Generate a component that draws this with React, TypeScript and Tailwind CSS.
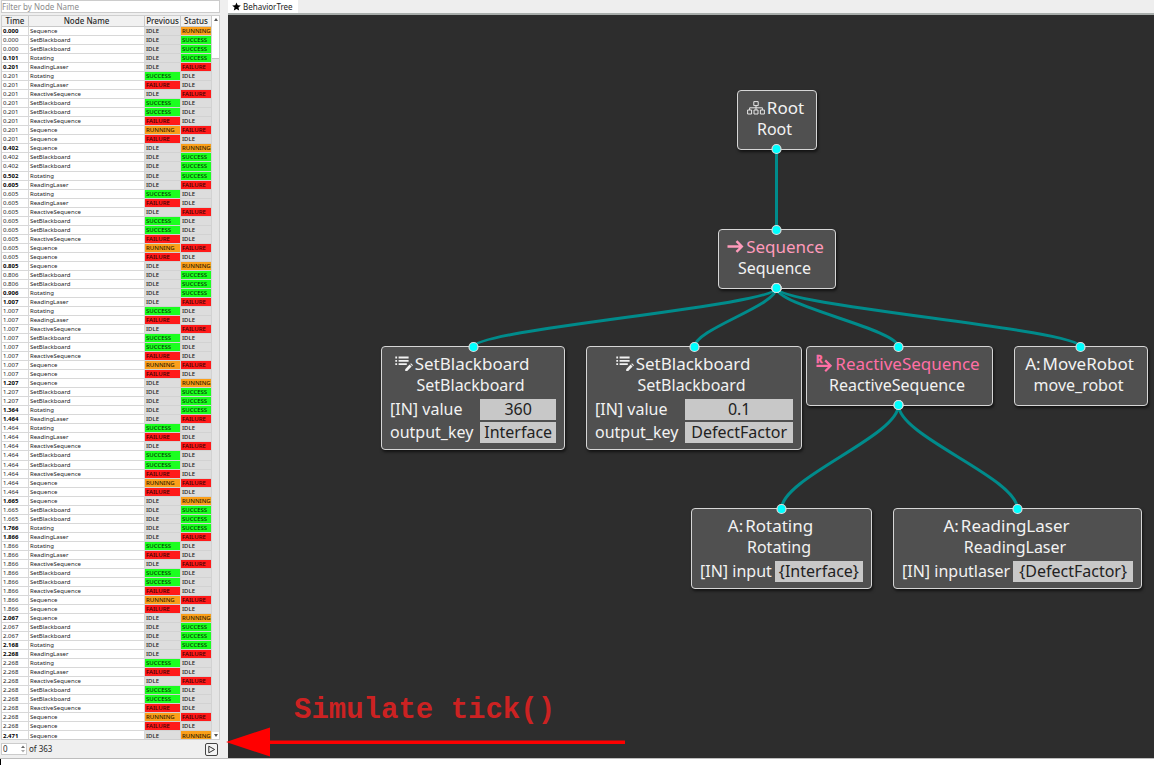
import React from "react";

type Status = "IDLE" | "RUNNING" | "SUCCESS" | "FAILURE";
type Transition = { time: string; bold: boolean; name: string; previous: Status; status: Status };

const CYCLE: { slot: number; name: string; previous: Status; status: Status }[] = [
  { slot: 0, name: "Sequence", previous: "IDLE", status: "RUNNING" },
  { slot: 1, name: "SetBlackboard", previous: "IDLE", status: "SUCCESS" },
  { slot: 1, name: "SetBlackboard", previous: "IDLE", status: "SUCCESS" },
  { slot: 2, name: "Rotating", previous: "IDLE", status: "SUCCESS" },
  { slot: 3, name: "ReadingLaser", previous: "IDLE", status: "FAILURE" },
  { slot: 3, name: "Rotating", previous: "SUCCESS", status: "IDLE" },
  { slot: 3, name: "ReadingLaser", previous: "FAILURE", status: "IDLE" },
  { slot: 3, name: "ReactiveSequence", previous: "IDLE", status: "FAILURE" },
  { slot: 3, name: "SetBlackboard", previous: "SUCCESS", status: "IDLE" },
  { slot: 3, name: "SetBlackboard", previous: "SUCCESS", status: "IDLE" },
  { slot: 3, name: "ReactiveSequence", previous: "FAILURE", status: "IDLE" },
  { slot: 3, name: "Sequence", previous: "RUNNING", status: "FAILURE" },
  { slot: 3, name: "Sequence", previous: "FAILURE", status: "IDLE" },
];

const TIMES = [
  ["0.000", "0.000", "0.101", "0.201"],
  ["0.402", "0.402", "0.502", "0.605"],
  ["0.805", "0.806", "0.906", "1.007"],
  ["1.207", "1.207", "1.364", "1.464"],
  ["1.665", "1.665", "1.766", "1.866"],
  ["2.067", "2.067", "2.168", "2.268"],
];

const TRANSITIONS: Transition[] = [
  ...TIMES.flatMap((times) =>
    CYCLE.map((step, i) => ({
      time: times[step.slot],
      bold: i === 0 || i === 3 || i === 4,
      name: step.name,
      previous: step.previous,
      status: step.status,
    })),
  ),
  { time: "2.471", bold: true, name: "Sequence", previous: "IDLE", status: "RUNNING" },
];

const STATUS_CLASS: Record<Status, string> = {
  IDLE: "bg-[#dddddd] text-[#1c1c1c]",
  RUNNING: "bg-[#fb9f1a] text-[#2e1c00]",
  SUCCESS: "bg-[#1bff1f] text-[#033503]",
  FAILURE: "bg-[#ff1a1a] text-[#3a0202]",
};

function StatusCell({ value }: { value: Status }) {
  return (
    <td className={`border-r border-b border-[#d2d2d2] p-0 pl-px font-medium ${STATUS_CLASS[value]}`}>
      {value}
    </td>
  );
}

function TransitionTable() {
  return (
    <div className="flex min-h-0 flex-1 border border-[#cfcfcf] bg-white">
      <div className="min-w-0 flex-1 overflow-hidden">
        <table className="h-[725px] w-full table-fixed border-separate border-spacing-0 text-left text-[6px] leading-[8px] text-[#1c1c1c]">
          <colgroup>
            <col className="w-[27px]" />
            <col />
            <col className="w-[36px]" />
            <col className="w-[31px]" />
          </colgroup>
          <thead>
            <tr className="h-[11px] bg-[#f1f1f1] text-center text-[8px] leading-[10px] text-[#2a2a2a]">
              {["Time", "Node Name", "Previous", "Status"].map((label) => (
                <th key={label} className="border-r border-b border-[#c9c9c9] p-0 text-center font-medium">
                  {label}
                </th>
              ))}
            </tr>
          </thead>
          <tbody>
            {TRANSITIONS.map((row, i) => (
              <tr key={i} className="h-[9px]">
                <td className={row.bold ? "border-r border-b border-[#d8d8d8] p-0 pl-px font-bold text-black" : "border-r border-b border-[#d8d8d8] p-0 pl-px"}>
                  {row.time}
                </td>
                <td className="border-r border-b border-[#d8d8d8] p-0 pl-px">{row.name}</td>
                <StatusCell value={row.previous} />
                <StatusCell value={row.status} />
              </tr>
            ))}
          </tbody>
        </table>
      </div>
      <div className="flex w-[7px] flex-col bg-[#e4e4e4]">
        <button aria-label="Scroll up" className="flex h-[7px] items-center justify-center bg-white">
          <svg viewBox="0 0 4 3" className="h-[3px] w-1 fill-[#555]"><path d="M0 3 2 0 4 3Z" /></svg>
        </button>
        <div className="h-9 border-b border-[#c4c4c4] bg-white" />
        <div className="flex-1" />
        <button aria-label="Scroll down" className="flex h-[7px] items-center justify-center bg-white">
          <svg viewBox="0 0 4 3" className="h-[3px] w-1 fill-[#555]"><path d="M0 0 2 3 4 0Z" /></svg>
        </button>
      </div>
    </div>
  );
}

function Sidebar() {
  return (
    <aside className="flex w-[228px] shrink-0 flex-col bg-[#efefef] pr-2 pl-px">
      <input
        type="text"
        aria-label="Filter by Node Name"
        placeholder="Filter by Node Name"
        className="mb-[2px] h-[13px] w-full border border-[#cccccc] bg-white p-0 text-[8px] leading-[11px] text-[#333] outline-none placeholder:text-[#8c8c8c]"
      />
      <TransitionTable />
      <div className="flex h-[18px] shrink-0 items-center text-[8px] text-[#2a2a2a]">
        <div className="flex h-[12px] w-[26px] items-center border border-[#cccccc] bg-white">
          <input aria-label="Transition index" defaultValue="0" className="w-[18px] p-0 pl-px leading-[10px] outline-none" />
          <svg viewBox="0 0 6 10" className="h-[10px] w-[6px]">
            <path d="M1 4 3 1.4 5 4Z" fill="#666" />
            <path d="M1 6 3 8.6 5 6Z" fill="#aaa" />
          </svg>
        </div>
        <span className="ml-[2px]">of 363</span>
        <button aria-label="Play" className="mr-[2px] ml-auto flex h-[13px] w-[13px] items-center justify-center rounded-[2px] border border-[#444] bg-[#f4f4f4]">
          <svg viewBox="0 0 9 9" className="h-[9px] w-[9px] fill-none stroke-[#333]"><path d="M1.8 1.2 7.6 4.5 1.8 7.8Z" /></svg>
        </button>
      </div>
    </aside>
  );
}

function TreeIcon() {
  return (
    <svg viewBox="0 0 18 14" className="h-[14px] w-[18px] shrink-0 fill-none stroke-[#e6e6e6]">
      <path d="M6.8.6h4.4v4H6.8zM.6 9h4v4h-4zM7 9h4v4H7zM13.4 9h4v4h-4zM9 4.6V9M2.6 9V6.8h12.8V9" />
    </svg>
  );
}

function ArrowIcon() {
  return (
    <svg viewBox="0 0 17 14" className="h-[14px] w-[17px] shrink-0 fill-none stroke-[#ff9bbb]">
      <path strokeWidth="2.4" d="M.5 6.5h14.5M9.5 1.2 14.8 6.5 9.5 11.8" />
    </svg>
  );
}

function ListEditIcon() {
  return (
    <svg viewBox="0 0 18 16" className="h-4 w-[18px] shrink-0 fill-[#f2f2f2]">
      <path d="M.3.6h1.8v1.8H.3zM.3 3.9h1.8v1.8H.3zM.3 7.2h1.8V9H.3zM3.6.6h10v1.8h-10zM3.6 3.9h10v1.8h-10zM3.6 7.2h8.2V9H3.6z" />
      <path d="M10.2 13.2 14.6 8.6 16.6 10.6 12.2 15H10.2zM15.2 8 16 7.2 18 9.2 17.2 10z" />
    </svg>
  );
}

function ReactiveIcon() {
  return (
    <svg viewBox="0 0 17 17" className="h-[17px] w-[17px] shrink-0 overflow-visible fill-none stroke-[#ff6fa5]">
      <text x="0" y="7.6" fontSize="10" fontWeight="800" strokeWidth="0.3" fill="#ff6fa5">R</text>
      <path strokeWidth="2.2" d="M.5 10.8h14M9.2 5.4 14.6 10.8 9.2 16.2" />
    </svg>
  );
}

type TreeNode = {
  id: string;
  place: string;
  icon: React.ReactNode;
  title: string;
  titleClass: string;
  name: string;
  ports?: [string, string][];
};

const ACTION = <span className="text-[#f2f2f2]">A:</span>;

const NODES: TreeNode[] = [
  { id: "root", place: "left-[509px] top-[75px] w-[80px] h-[60px]", icon: <TreeIcon />, title: "Root", titleClass: "text-[#f2f2f2]", name: "Root" },
  { id: "seq", place: "left-[490px] top-[214px] w-[118px] h-[60px]", icon: <ArrowIcon />, title: "Sequence", titleClass: "text-[#ff9bbb]", name: "Sequence" },
  { id: "sb1", place: "left-[153px] top-[331px] w-[184px]", icon: <ListEditIcon />, title: "SetBlackboard", titleClass: "text-[#f2f2f2]", name: "SetBlackboard", ports: [["[IN] value", "360"], ["output_key", "Interface"]] },
  { id: "sb2", place: "left-[358px] top-[331px] w-[216px]", icon: <ListEditIcon />, title: "SetBlackboard", titleClass: "text-[#f2f2f2]", name: "SetBlackboard", ports: [["[IN] value", "0.1"], ["output_key", "DefectFactor"]] },
  { id: "rs", place: "left-[578px] top-[331px] w-[187px] h-[60px]", icon: <ReactiveIcon />, title: "ReactiveSequence", titleClass: "text-[#ff6fa5]", name: "ReactiveSequence" },
  { id: "move", place: "left-[786px] top-[331px] w-[134px] h-[60px]", icon: ACTION, title: "MoveRobot", titleClass: "text-[#f2f2f2]", name: "move_robot" },
  { id: "rot", place: "left-[463px] top-[493px] w-[181px]", icon: ACTION, title: "Rotating", titleClass: "text-[#f2f2f2]", name: "Rotating", ports: [["[IN] input", "{Interface}"]] },
  { id: "laser", place: "left-[665px] top-[493px] w-[249px]", icon: ACTION, title: "ReadingLaser", titleClass: "text-[#f2f2f2]", name: "ReadingLaser", ports: [["[IN] inputlaser", "{DefectFactor}"]] },
];

function NodeCard({ node }: { node: TreeNode }) {
  const manyPorts = (node.ports?.length ?? 0) > 1;
  return (
    <div className={`absolute rounded-[4px] border border-[#d6d6d6] bg-[#505050] px-2 pt-[5px] pb-[6px] whitespace-nowrap text-[#f2f2f2] shadow-[1px_2px_3px_rgba(0,0,0,0.6)] ${node.place}`}>
      <div className={`flex h-[23px] items-center justify-center gap-[2px] text-[17px] leading-[22px] ${node.titleClass} ${node.ports ? "pr-[22px]" : "pr-[3px]"}`}>
        {node.icon}
        <span>{node.title}</span>
      </div>
      <div className="flex h-[21px] items-center justify-center pr-[5px] text-[16px] leading-[21px]">{node.name}</div>
      {node.ports && (
        <div className={`mt-[3px] grid grid-cols-[auto_1fr] gap-y-[2px] text-[16px] leading-[21px] ${manyPorts ? "gap-x-[7px]" : "gap-x-[3px]"}`}>
          {node.ports.map(([label, value]) => (
            <React.Fragment key={label}>
              <span>{label}</span>
              <span className="h-[21px] bg-[#c8c8c8] text-center text-[#222222]">{value}</span>
            </React.Fragment>
          ))}
        </div>
      )}
    </div>
  );
}

const EDGES: [number, number, number, number][] = [
  [548, 134, 548, 215],
  [548, 273, 245, 332],
  [548, 273, 466, 332],
  [548, 273, 670, 332],
  [548, 273, 852, 332],
  [670, 390, 553, 494],
  [670, 390, 789, 494],
];

function Edges() {
  return (
    <svg className="pointer-events-none absolute inset-0 h-full w-full">
      {EDGES.map(([x1, y1, x2, y2], i) => {
        const pull = (y2 - y1) * 0.3;
        return (
          <path
            key={i}
            d={`M${x1 + 0.5} ${y1}C${x1 + 0.5} ${y1 + pull} ${x2 + 0.5} ${y2 - pull} ${x2 + 0.5} ${y2}`}
            fill="none"
            stroke="#008b8b"
            strokeWidth="3"
          />
        );
      })}
      {EDGES.flatMap(([x1, y1, x2, y2]) => [[x1, y1], [x2, y2]]).map(([x, y], i) => (
        <circle key={i} cx={x + 0.5} cy={y} r="4.5" fill="#00ffff" stroke="#dcdcdc" strokeWidth="1.2" />
      ))}
    </svg>
  );
}

function Annotation() {
  return (
    <div className="absolute bottom-0 -left-[2px] w-[400px] text-[#cc2222]">
      <p className="pl-[68px] font-['Liberation_Mono',monospace] text-[29px] leading-[30px] font-bold whitespace-nowrap">Simulate tick()</p>
      <svg viewBox="0 0 400 32" className="block h-8 w-full fill-[#ff0000]">
        <path d="M0 16 44 1.5V14.5H399V18H44V30.5Z" />
      </svg>
    </div>
  );
}

export default function App() {
  return (
    <div className="flex h-screen flex-col bg-white pr-4 font-['Noto_Sans','Open_Sans',sans-serif]">
      <div className="flex min-h-0 flex-1">
        <Sidebar />
        <main className="flex min-w-0 flex-1 flex-col bg-[#eeeeee]">
          <nav className="flex h-[15px] shrink-0 border-b-2 border-[#a8adab]">
            <button className="flex items-center gap-[2px] bg-white pr-[5px] pl-1 text-[8px] leading-[13px] text-[#1c1c1c]">
              <svg viewBox="0 0 24 24" className="h-[9px] w-[9px] fill-black">
                <path d="m12 1 3.2 7.6 8.3.7-6.3 5.4 1.9 8.1L12 18.5l-7.1 4.3 1.9-8.1L.5 9.3l8.3-.7z" />
              </svg>
              BehaviorTree
            </button>
          </nav>
          <section className="relative min-h-0 flex-1 bg-[#2d2d2d]">
            {NODES.map((node) => (
              <NodeCard key={node.id} node={node} />
            ))}
            <Edges />
            <Annotation />
          </section>
        </main>
      </div>
      <footer className="h-[7px] shrink-0 border-t border-[#bdbdbd]">
        <div className="h-full w-px bg-black" />
      </footer>
    </div>
  );
}
